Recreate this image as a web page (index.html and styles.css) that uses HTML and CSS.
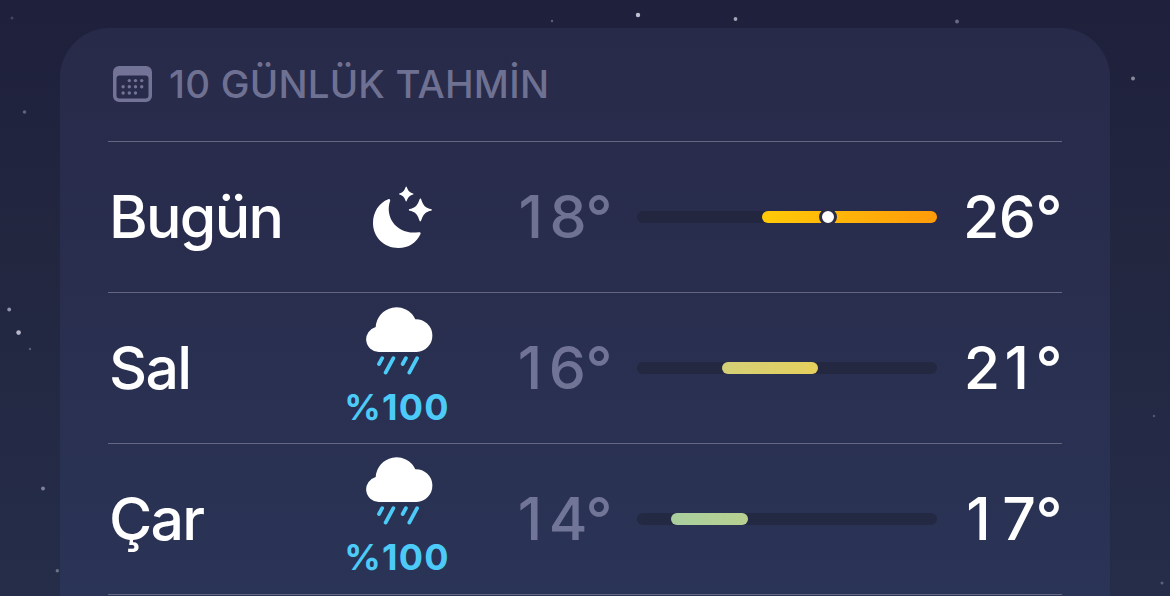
FILE: index.html
```
<!DOCTYPE html>
<html lang="tr">
  <head>
    <meta charset="UTF-8" />
    <meta name="viewport" content="width=device-width, initial-scale=1.0" />
    <title>10 Günlük Tahmin</title>
    <link rel="stylesheet" href="styles.css">
  </head>
  <body>
    <svg class="stars" width="1170" height="596" viewBox="0 0 1170 596">
      <circle cx="638" cy="15" r="2.2" opacity="0.85" />
      <circle cx="735.5" cy="19" r="1.9" opacity="0.7" />
      <circle cx="552" cy="21" r="1.2" opacity="0.35" />
      <circle cx="957" cy="21.5" r="1.9" opacity="0.4" />
      <circle cx="1133" cy="78.5" r="2" opacity="0.55" />
      <circle cx="12" cy="18" r="1.5" opacity="0.2" />
      <circle cx="24.5" cy="112" r="1.8" opacity="0.35" />
      <circle cx="9.2" cy="309.5" r="1.9" opacity="0.6" />
      <circle cx="18.6" cy="332.6" r="2.3" opacity="0.8" />
      <circle cx="30" cy="349" r="1.2" opacity="0.3" />
      <circle cx="43" cy="488.5" r="1.9" opacity="0.5" />
      <circle cx="57.3" cy="570.8" r="1.7" opacity="0.4" />
      <circle cx="1154" cy="416" r="1.3" opacity="0.25" />
      <circle cx="1162" cy="583" r="1.5" opacity="0.3" />
    </svg>

    <svg class="symbols" width="0" height="0">
      <symbol id="rain" viewBox="0 0 68 68">
        <path fill="#fff" d="M12.7 45 A12.7 12.7 0 0 1 9.7 20 A20.8 20.8 0 0 1 49.3 12.2 A16.4 16.4 0 0 1 50.6 45 Z" />
        <path fill="none" stroke="#4dcbf8" stroke-width="3.8" stroke-linecap="round" d="M16.2 51.2 L13 57 M27.4 51.2 L19.6 65.6 M39.9 51.2 L36.7 57 M51.1 51.2 L43.3 65.6" />
      </symbol>
    </svg>

    <div class="card">
      <div class="card-header">
        <svg class="calendar-icon" width="40" height="36" viewBox="0 0 40 36">
          <path fill-rule="evenodd" d="M6 0 H33 A6 6 0 0 1 39 6 V30 A6 6 0 0 1 33 36 H6 A6 6 0 0 1 0 30 V6 A6 6 0 0 1 6 0 Z M6.5 9.5 A3 3 0 0 0 3.5 12.5 V29.5 A3 3 0 0 0 6.5 32.5 H32.5 A3 3 0 0 0 35.5 29.5 V12.5 A3 3 0 0 0 32.5 9.5 Z" />
          <g>
            <circle cx="16.3" cy="14.6" r="1.7" />
            <circle cx="22.5" cy="14.6" r="1.7" />
            <circle cx="28.7" cy="14.6" r="1.7" />
            <circle cx="10.1" cy="20.8" r="1.7" />
            <circle cx="16.3" cy="20.8" r="1.7" />
            <circle cx="22.5" cy="20.8" r="1.7" />
            <circle cx="28.7" cy="20.8" r="1.7" />
            <circle cx="10.1" cy="27" r="1.7" />
            <circle cx="16.3" cy="27" r="1.7" />
            <circle cx="22.5" cy="27" r="1.7" />
          </g>
        </svg>
        <span class="card-title">10 GÜNLÜK TAHMİN</span>
      </div>

      <div class="day-row">
        <span class="day">Bugün</span>
        <div class="condition">
          <svg class="moon-icon" width="60" height="62" viewBox="0 0 60 62">
            <path d="M16.3 13.2 C17.5 12.7 18.6 13.7 18.1 15 C12.3 31.5 25.5 49.5 46.5 46.2 C48.2 45.9 49 46.6 48.5 47.9 C44.7 56.4 36.5 62 26.5 62 C11.8 62 1 51 1 37 C1 26 7 16.8 16.3 13.2 Z" />
            <path d="M34.2 0.5 C35.3 0.5 35.1 6 41 7.5 C41.8 7.7 41.8 8.4 41 8.6 C35.1 10.1 35.3 15.5 34.2 15.5 C33.1 15.5 33.3 10.1 27.5 8.6 C26.7 8.4 26.7 7.7 27.5 7.5 C33.3 6 33.1 0.5 34.2 0.5 Z" />
            <path d="M48.4 12.5 C50.2 12.5 49.3 21.5 59 23 C60 23.2 60 24.6 59 24.8 C49.3 26.3 50.2 35.5 48.4 35.5 C46.6 35.5 47.5 26.3 37.6 24.8 C36.6 24.6 36.6 23.2 37.6 23 C47.5 21.5 46.6 12.5 48.4 12.5 Z" />
          </svg>
        </div>
        <span class="temp low"><span class="one">1</span>8°</span>
        <div class="range">
          <div class="range-fill today" style="left: 124.5px; width: 175.5px"></div>
          <div class="range-now" style="left: 191px"></div>
        </div>
        <span class="temp high">26°</span>
      </div>

      <div class="day-row">
        <span class="day">Sal</span>
        <div class="condition">
          <svg class="rain-icon" width="68" height="68"><use href="#rain" /></svg>
          <span class="chance">%100</span>
        </div>
        <span class="temp low"><span class="one">1</span>6°</span>
        <div class="range">
          <div class="range-fill mild" style="left: 84.5px; width: 96.5px"></div>
        </div>
        <span class="temp high">2<span class="one">1</span>°</span>
      </div>

      <div class="day-row">
        <span class="day">Çar</span>
        <div class="condition raised">
          <svg class="rain-icon" width="68" height="68"><use href="#rain" /></svg>
          <span class="chance">%100</span>
        </div>
        <span class="temp low"><span class="one">1</span>4°</span>
        <div class="range">
          <div class="range-fill cool" style="left: 33.5px; width: 77.5px"></div>
        </div>
        <span class="temp high"><span class="one wide">1</span>7°</span>
      </div>

      <div class="card-end"></div>
    </div>
  </body>
</html>
```
FILE: styles.css
```
* {
  box-sizing: border-box;
}

body {
  margin: 0;
  height: 596px;
  padding: 28px 60px 0;
  overflow: hidden;
  font-family: Inter, "Liberation Sans", sans-serif;
  color: #fff;
  background: linear-gradient(#1e203c, #22263f 40%, #252d49);
}

.stars {
  position: absolute;
  top: 0;
  left: 0;
  fill: #dcdcec;
}

.symbols {
  position: absolute;
}

.card {
  position: relative;
  height: 568px;
  padding: 0 48px;
  border-radius: 50px 50px 0 0;
  background: linear-gradient(#282a49, #292d4d 36%, #2a3456);
}

.card-header {
  display: flex;
  align-items: center;
  height: 113px;
  padding-left: 5px;
}

.calendar-icon {
  margin-bottom: 2px;
  fill: #727396;
}

.card-title {
  margin: 0 0 1px 16px;
  font-size: 38.5px;
  font-weight: 460;
  letter-spacing: 0.2px;
  color: #6f7193;
}

.day-row {
  display: grid;
  grid-template-columns: 230px 118px 156px 326px 1fr;
  align-items: center;
  height: 151px;
  border-top: 1px solid #64677f;
}

.card-end {
  border-top: 1px solid #64677f;
}

.day,
.temp {
  font-size: 59px;
  font-weight: 500;
  line-height: 72px;
}

.day {
  padding-left: 1px;
  letter-spacing: -1.7px;
}

.condition {
  display: flex;
  flex-direction: column;
  align-items: center;
}

.raised {
  padding-bottom: 2px;
}

.moon-icon {
  margin-left: 10px;
  fill: #fff;
}

.rain-icon {
  margin-left: 6px;
}

.chance {
  margin-top: 10px;
  font-size: 36px;
  font-weight: 650;
  line-height: 44px;
  letter-spacing: 1.2px;
  color: #4dcbf8;
}

.temp {
  text-align: right;
  letter-spacing: -0.5px;
}

/* widens the narrow 1 so digits line up between rows */
.one {
  margin: 0 7px 0 5px;
}

.wide {
  margin-right: 12px;
}

.low {
  color: rgba(183, 183, 218, 0.5);
}

.range {
  position: relative;
  width: 300px;
  height: 12px;
  margin-left: 25px;
  border-radius: 6px;
  background: rgba(30, 32, 50, 0.5);
}

.range-fill {
  position: absolute;
  top: 0;
  height: 12px;
  border-radius: 6px;
}

.today {
  background: linear-gradient(90deg, #ffca08, #ff9b0a);
}

.mild {
  background: linear-gradient(90deg, #d4d078, #e6cf5c);
}

.cool {
  background: linear-gradient(90deg, #a9cf9e, #b8d090);
}

.range-now {
  position: absolute;
  top: 6px;
  width: 18px;
  height: 18px;
  border: 3px solid #2a2d48;
  border-radius: 50%;
  background: #fff;
  transform: translate(-50%, -50%);
}
```
